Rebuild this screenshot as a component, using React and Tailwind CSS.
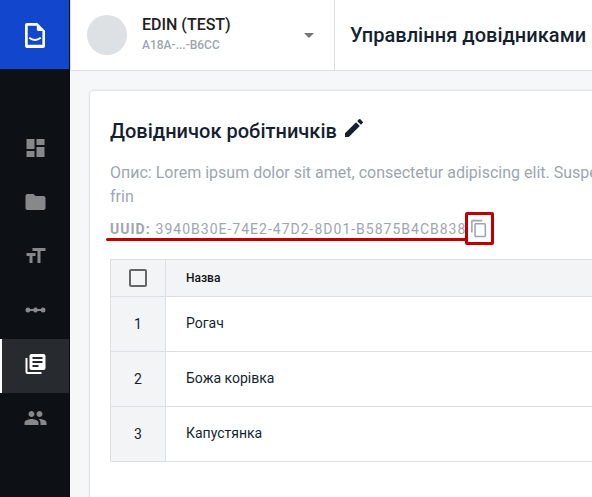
import React from "react";
import {
  MdDashboard,
  MdFolder,
  MdFormatSize,
  MdLinearScale,
  MdLibraryBooks,
  MdPeople,
  MdEdit,
  MdContentCopy,
  MdArrowDropDown,
  MdCheckBoxOutlineBlank,
} from "react-icons/md";

const navItems = [
  { Icon: MdDashboard },
  { Icon: MdFolder },
  { Icon: MdFormatSize },
  { Icon: MdLinearScale },
  { Icon: MdLibraryBooks, active: true },
  { Icon: MdPeople },
];

const rows = ["Рогач", "Божа корівка", "Капустянка"];

function Logo() {
  return (
    <svg width="20" height="25" viewBox="0 0 20 25" fill="none">
      <path
        fill="#fff"
        fillRule="evenodd"
        d="M2 0H12.3L20 7.8V23a2 2 0 0 1-2 2H2a2 2 0 0 1-2-2V2a2 2 0 0 1 2-2ZM2.7 2.7V21.8H17.4V8H13.2a1.4 1.4 0 0 1-1.4-1.4V2.7Z"
      />
      <path d="M4.2 14.8Q10 19.2 15.8 14.8" stroke="#fff" strokeWidth="2" />
    </svg>
  );
}

function Sidebar() {
  return (
    <aside className="w-[70px] shrink-0 border-r border-[#0b0d12] bg-[#0d1116]">
      <div className="flex h-[69px] items-center justify-center bg-[#1246cc] pt-px pl-px">
        <Logo />
      </div>
      <nav className="pt-[54px]">
        {navItems.map(({ Icon, active }, i) => (
          <div
            key={i}
            className={
              active
                ? "flex h-[54px] items-center border-l-2 border-white bg-[#272a2f] pb-1 pl-[21px] text-white"
                : "flex h-[54px] items-center border-l-2 border-transparent pb-1 pl-[21px] text-[#86888a]"
            }
          >
            <Icon size={24} className="translate-x-[0.5px]" />
          </div>
        ))}
      </nav>
    </aside>
  );
}

function Header() {
  return (
    <header className="flex h-[71px] border-b border-l border-[#dcdfe3] bg-white">
      <div className="flex w-[264px] shrink-0 items-center border-r border-[#dcdfe3] pl-4">
        <div className="size-10 shrink-0 rounded-full bg-[#dde1e4]" />
        <div className="ml-[15px] flex-1 pb-[3px]">
          <div className="text-base leading-[22px] font-medium text-[#212121]">EDIN (TEST)</div>
          <div className="text-xs leading-[18px] font-medium text-[#9da6b0]">A18A-...-B6CC</div>
        </div>
        <MdArrowDropDown size={24} className="mr-[13px] text-[#757575]" />
      </div>
      <h1 className="pt-[20px] pl-[15px] text-xl leading-[30px] font-medium tracking-[0.03px] whitespace-nowrap text-[#151f30]">
        Управління довідниками
      </h1>
    </header>
  );
}

function DirectoryTable() {
  return (
    <div className="mt-[15px] w-[640px] border-t border-l border-[#dcdfe3] text-sm text-[#151f30]">
      <div className="flex h-[37px] border-b border-[#dcdfe3] bg-[#f3f4f6]">
        <div className="flex w-[55px] items-center justify-center border-r border-[#dcdfe3]">
          <MdCheckBoxOutlineBlank size={24} className="text-[#666668]" />
        </div>
        <div className="flex items-center pl-5 text-xs font-medium text-[#111214]">Назва</div>
      </div>
      {rows.map((name, i) => (
        <div key={name} className="flex h-[55px] border-b border-[#dcdfe3]">
          <div className="flex w-[55px] items-center justify-center border-r border-[#dcdfe3] bg-[#f3f4f6]">
            {i + 1}
          </div>
          <div className="flex items-center pb-[2px] pl-5 whitespace-nowrap">{name}</div>
        </div>
      ))}
    </div>
  );
}

export default function App() {
  return (
    <div className="flex h-[497px] w-[592px] overflow-hidden bg-[#f6f7f9] font-['Roboto',sans-serif]">
      <Sidebar />
      <div className="min-w-0 flex-1 overflow-hidden">
        <Header />
        <main className="pt-5 pl-5">
          <section className="h-[440px] w-[680px] rounded-[4px] bg-white pt-[25px] pl-5 shadow-[0_0_3px_rgba(0,0,0,0.2)]">
            <div className="flex h-6 items-center">
              <h2 className="pt-[6px] text-xl leading-6 font-medium tracking-[0.02px] whitespace-nowrap text-[#151f30]">
                Довідничок робітничків
              </h2>
              <MdEdit size={24} className="ml-[5px] text-[#151f30]" />
            </div>
            <div className="mt-[21px] text-base leading-6 whitespace-nowrap text-[#9da6b0]">
              <p>Опис: Lorem ipsum dolor sit amet, consectetur adipiscing elit. Suspe</p>
              <p>frin</p>
            </div>
            <div className="relative mt-[10px] flex h-[25px] items-center pb-[5px] text-sm tracking-[1px] whitespace-nowrap text-[#9da6b0]">
              <span className="font-bold">UUID:</span>
              <span className="ml-[5px]">3940B30E-74E2-47D2-8D01-B5875B4CB838</span>
              <div className="absolute top-[19px] left-[-4px] h-[3px] w-[361px] rounded-full bg-[#c00000]" />
              <div className="absolute top-[-7px] left-[355px] flex h-[33px] w-[29px] items-center justify-center rounded-[2px] border-3 border-[#c00000]">
                <MdContentCopy size={19} className="-translate-x-[0.5px]" />
              </div>
            </div>
            <DirectoryTable />
          </section>
        </main>
      </div>
    </div>
  );
}
